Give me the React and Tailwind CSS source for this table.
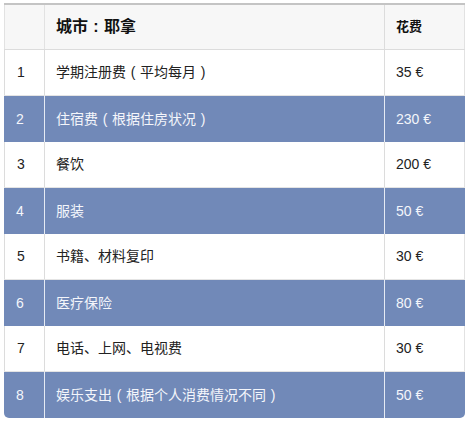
const rows = [
  ['1', '学期注册费（平均每月）', '35 €'],
  ['2', '住宿费（根据住房状况）', '230 €'],
  ['3', '餐饮', '200 €'],
  ['4', '服装', '50 €'],
  ['5', '书籍、材料复印', '30 €'],
  ['6', '医疗保险', '80 €'],
  ['7', '电话、上网、电视费', '30 €'],
  ['8', '娱乐支出（根据个人消费情况不同）', '50 €'],
]

// full-width punctuation drawn centred in its cell, like the source font does
function Label({ text }) {
  return text.split('').map((ch, i) =>
    ch === '（' || ch === '）' || ch === '：' ? (
      <span key={i} className="inline-block w-[1em] text-center">
        {ch === '（' ? '(' : ch === '）' ? ')' : ':'}
      </span>
    ) : (
      ch
    )
  )
}

export default function App() {
  return (
    <div
      className="w-[469px] h-[422px] bg-white pt-[3px] pl-[4px] pr-[4px]"
      style={{ fontFamily: '"Liberation Sans", "Noto Sans CJK SC", sans-serif' }}
    >
      <div className="border-t-2 border-[#c4c4c4] rounded-b-[5px] overflow-hidden">
        <div className="grid grid-cols-[41px_340px_80px] h-[45px] bg-[#f7f7f7] border-b border-[#dcdcdc]">
          <div className="border-r border-l border-[#e2e2e2]" />
          <div className="flex items-center pl-[11px] text-[16px] font-bold text-[#111] border-r border-[#dcdcdc]">
            <span><Label text="城市：耶拿" /></span>
          </div>
          <div className="flex items-center pl-[11px] text-[13px] font-bold text-[#111] border-r border-[#e2e2e2]">花费</div>
        </div>
        {rows.map(([n, label, price], i) => {
          const blue = i % 2 === 1
          return (
            <div
              key={n}
              className={`grid grid-cols-[41px_340px_80px] h-[46px] text-[14px] ${
                blue ? 'bg-[#7189b8] text-[#f4f6fb]' : 'bg-white text-[#222] border-b border-[#e4e4e4]'
              }`}
            >
              <div className={`flex items-center pl-[12px] border-r ${blue ? 'border-[#e6ebf4]' : 'border-[#dcdcdc] border-l'}`}>{n}</div>
              <div className={`flex items-center pl-[11px] border-r ${blue ? 'border-[#e6ebf4]' : 'border-[#dcdcdc]'}`}>
                <span><Label text={label} /></span>
              </div>
              <div className={`flex items-center pl-[11px] ${blue ? '' : 'border-r border-[#e2e2e2]'}`}>{price}</div>
            </div>
          )
        })}
      </div>
    </div>
  )
}
